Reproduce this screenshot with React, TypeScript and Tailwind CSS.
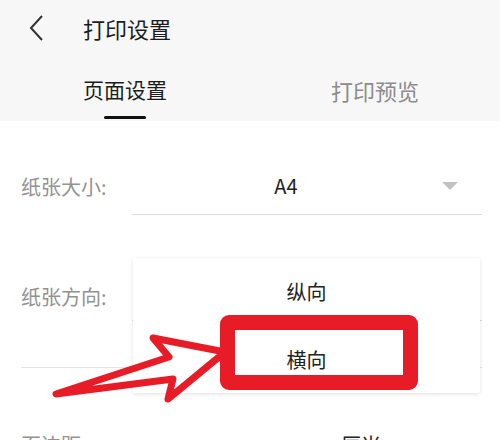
import React from "react";

const font = { fontFamily: '"Noto Sans CJK SC", "Noto Sans", sans-serif' };

function Tri() {
  return (
    <svg width="16" height="8" viewBox="0 0 16 8">
      <polygon points="0,0 16,0 8,8" fill="#c2c2c2" />
    </svg>
  );
}

export default function App() {
  return (
    <div className="relative w-[500px] h-[440px] overflow-hidden bg-white" style={font}>
      {/* Header */}
      <div className="h-[121px] bg-[#f7f7f7] flex flex-col">
        <div className="h-[55px] flex items-center">
          <div className="w-[83px] pl-[29px] flex items-center">
            <svg width="16" height="26" viewBox="0 0 16 26">
              <polyline points="13,1 2,13 13,25" fill="none" stroke="#333" strokeWidth="2" />
            </svg>
          </div>
          <div className="text-[22px] leading-none text-[#1c1c1c]">打印设置</div>
        </div>
        <div className="flex flex-1">
          <div className="w-[250px] flex flex-col items-center pt-[24px]">
            <div className="text-[21px] leading-none text-[#1c1c1c]">页面设置</div>
            <div className="mt-[16px] w-[42px] h-[3px] rounded-sm bg-[#111]" />
          </div>
          <div className="w-[250px] flex flex-col items-center pt-[24px]">
            <div className="text-[22px] leading-none text-[#8c8c8c]">打印预览</div>
          </div>
        </div>
      </div>

      {/* Row 1 */}
      <div className="pt-[37px] pl-[21px] pr-[18px]">
        <div className="flex h-[57px]">
          <div className="w-[111px] flex items-center text-[20px] text-[#929292]">纸张大小:</div>
          <div className="flex-1 flex items-center border-b border-[#dcdcdc]">
            <div className="flex-1 text-center text-[20px] text-[#222]">A4</div>
            <div className="w-[42px] flex justify-start pl-[2px]">
              <Tri />
            </div>
          </div>
        </div>
      </div>

      {/* Row 2 */}
      <div className="pt-[57px] pl-[21px] pr-[18px]">
        <div className="flex h-[49px]">
          <div className="w-[111px] flex items-center text-[20px] text-[#929292]">纸张方向:</div>
          <div className="flex-1 flex items-center border-b border-[#dcdcdc]">
            <div className="flex-1" />
            <div className="w-[42px] flex justify-start pl-[2px]">
              <Tri />
            </div>
          </div>
        </div>
        <div className="mt-[46px] border-b border-[#e3e3e3]" />
      </div>

      {/* Row 3 */}
      <div className="pt-[48px] pl-[21px] pr-[18px]">
        <div className="flex h-[57px]">
          <div className="w-[111px] flex items-center text-[20px] text-[#929292]">页边距:</div>
          <div className="flex-1 flex items-center">
            <div className="flex-1 text-center text-[20px] text-[#222] pl-[150px]">厘米</div>
            <div className="w-[42px] flex justify-start pl-[2px]">
              <Tri />
            </div>
          </div>
        </div>
      </div>

      {/* Popup */}
      <div className="absolute left-[133px] top-[258px] w-[347px] h-[135px] bg-white rounded-[2px] shadow-[0_1px_4px_rgba(0,0,0,0.12)] flex flex-col">
        <div className="h-[68px] flex items-center justify-center text-[20px] text-[#222]">纵向</div>
        <div className="h-[67px] flex items-center justify-center text-[20px] text-[#222]">横向</div>
      </div>

      {/* Red highlight box */}
      <div className="absolute left-[220px] top-[315px] w-[198px] h-[75px] border-[15px] border-[#e81c27] rounded-[9px]" />

      {/* Arrow */}
      <svg className="absolute left-0 top-0" width="500" height="440" viewBox="0 0 500 440">
        <polygon
          points="225,352 153,338 169,357 56,394 173,379 168,399"
          fill="white"
          stroke="#e81c27"
          strokeWidth="7"
          strokeLinejoin="round"
        />
      </svg>
    </div>
  );
}
